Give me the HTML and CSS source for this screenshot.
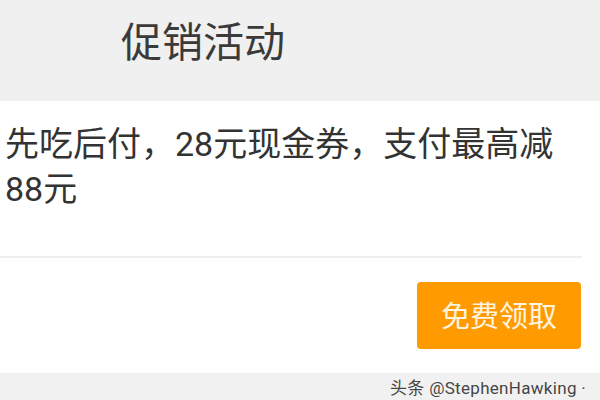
FILE: index.html
```html
<!DOCTYPE html>
<html lang="zh-CN">
<head>
  <meta charset="UTF-8" />
  <meta name="viewport" content="width=device-width, initial-scale=1.0"/>
  <title>促销活动</title>
  <link rel="stylesheet" href="styles.css">
</head>
<body>
  <header class="title-bar">
    <h1>促销活动</h1>
  </header>

  <main class="promo">
    <p class="promo-text">先吃后付，28元现金券，支付最高减88元</p>
    <div class="divider"></div>
    <div class="actions">
      <button class="claim-btn">免费领取</button>
    </div>
  </main>

  <footer class="bottom-strip">
    <span class="watermark">头条 @StephenHawking ·</span>
  </footer>
</body>
</html>
```

FILE: styles.css
```css
body {
  margin: 0;
  width: 600px;
  height: 400px;
  overflow: hidden;
  background-color: #ffffff;
  color: #333333;
  font-family: Roboto, "Noto Sans CJK SC", sans-serif;
  display: flex;
  flex-direction: column;
}

.title-bar {
  height: 101px;
  background-color: #f0f0f0;
  display: flex;
  align-items: center;
  padding-left: 121px;
}

.title-bar h1 {
  margin: 0;
  font-size: 41px;
  font-weight: normal;
  color: #3a3a3a;
  line-height: 1;
  padding-bottom: 14px;
}

.promo {
  flex: 1;
  display: flex;
  flex-direction: column;
}

.promo-text {
  margin: 0;
  padding: 21px 20px 0 5px;
  font-size: 34px;
  line-height: 45px;
  color: #333333;
}

.divider {
  height: 2px;
  margin: 44px 18px 0 0;
  background-color: #eeeeee;
}

.actions {
  display: flex;
  justify-content: flex-end;
  padding: 24px 19px 0 0;
}

.claim-btn {
  width: 164px;
  height: 67px;
  border: none;
  border-radius: 4px;
  background-color: #ff9a00;
  color: #fff4e0;
  font-family: inherit;
  font-size: 29px;
  padding: 0 0 4px;
  cursor: pointer;
}

.bottom-strip {
  height: 27px;
  background-color: #f1f1f1;
  display: flex;
  align-items: center;
  justify-content: flex-end;
  padding-right: 14px;
}

.watermark {
  font-size: 17px;
  letter-spacing: 0.3px;
  color: #444444;
  text-shadow: 0 0 1px #ffffff;
}
```
